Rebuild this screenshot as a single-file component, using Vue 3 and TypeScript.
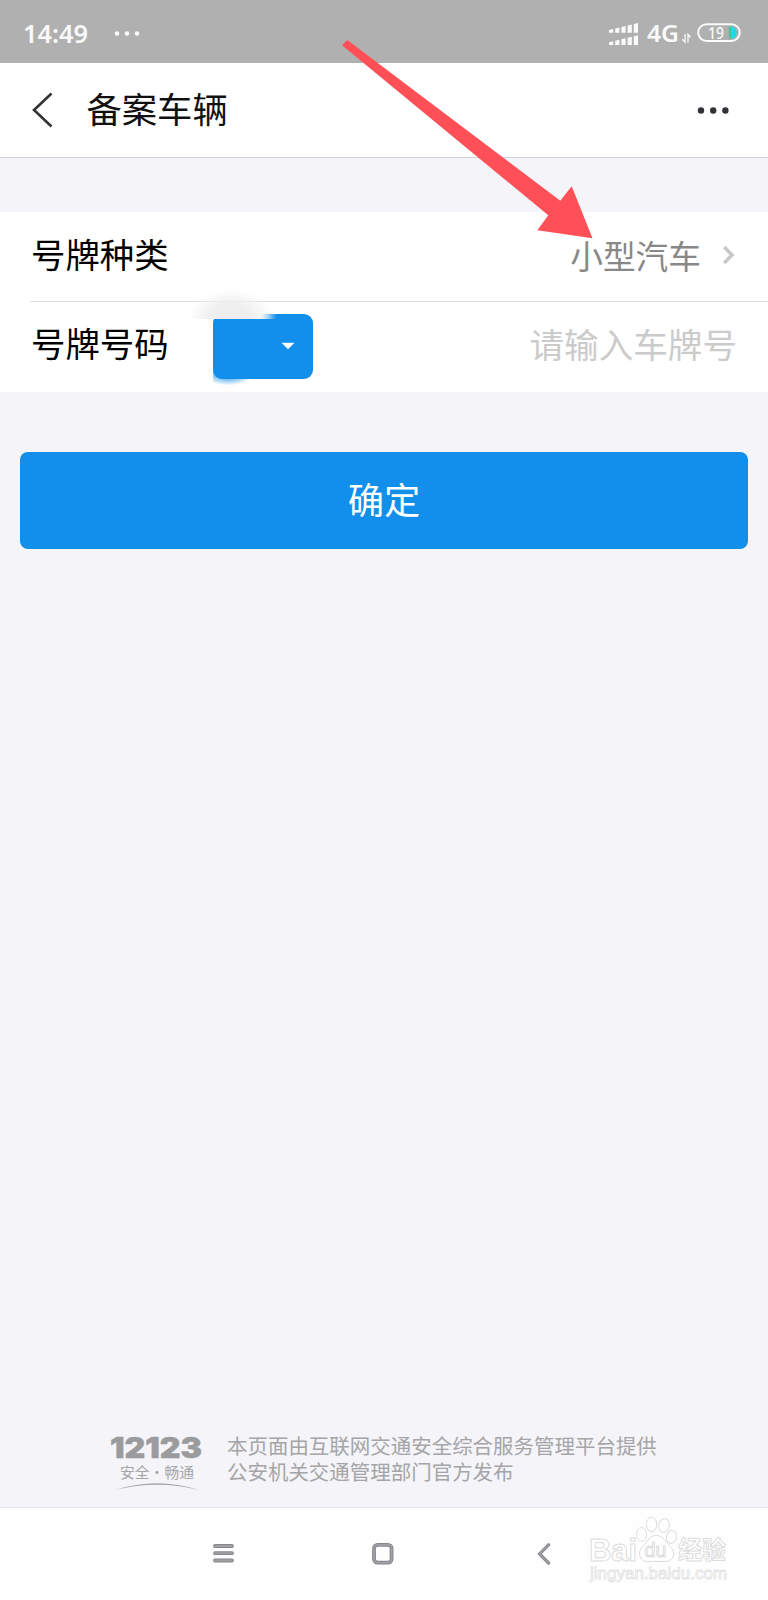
<script setup lang="ts">
import { ref } from 'vue'

const plateKind = ref<string>('小型汽车')
const plateNumber = ref<string>('')
const signalBars: number[] = [0, 1, 2, 3, 4]
</script>

<template>
  <div class="screen">
    <div class="status">
      <svg class="status-left" width="160" height="63" viewBox="0 0 160 63">
        <text x="23" y="42.7" textLength="65" lengthAdjust="spacingAndGlyphs" class="clock">14:49</text>
        <circle cx="117" cy="33.5" r="2.3" />
        <circle cx="127" cy="33.5" r="2.3" />
        <circle cx="137" cy="33.5" r="2.3" />
      </svg>
      <svg class="status-right" width="168" height="63" viewBox="600 0 168 63">
        <g v-for="i in signalBars" :key="i">
          <path :d="`M${609 + i * 6.2} ${30 - i * 1.5}l4.200-1V32.700h-4.200z`" />
          <path :d="`M${609 + i * 6.2} ${42.2 - i * 1.5}l4.200-1V45h-4.200z`" />
        </g>
        <text x="647" y="42" textLength="32" lengthAdjust="spacingAndGlyphs" class="net">4G</text>
        <path class="arrows" d="M685 34v8l-2.600-2.800M688 42.500v-8l2.600 2.800" />
        <rect class="cell" x="698.200" y="24.200" width="41.600" height="16.800" rx="8.400" />
        <path fill="#25d5e8" d="M730.500 26.500h1a6.200 6.200 0 0 1 0 12.300h-1z" />
        <path fill="#49c98a" d="M728.800 26.500h2.200v12.300h-2.200z" />
        <text x="708" y="38.600" textLength="16" lengthAdjust="spacingAndGlyphs" class="level">19</text>
      </svg>
    </div>

    <header class="header">
      <svg class="back" width="24" height="38" viewBox="0 0 24 38">
        <path d="M20.500 2.500 3 19l17.500 16.500" />
      </svg>
      <h1>备案车辆</h1>
      <svg class="more" width="34" height="8" viewBox="0 0 34 8">
        <circle cx="4" cy="4.500" r="3.200" />
        <circle cx="16.200" cy="4.500" r="3.200" />
        <circle cx="28.400" cy="4.500" r="3.200" />
      </svg>
    </header>

    <main class="main">
      <section class="form">
        <div class="row">
          <span class="label">号牌种类</span>
          <span class="value">{{ plateKind }}</span>
          <svg class="chevron" width="14" height="20" viewBox="0 0 14 20">
            <path d="m1.200 2 7.800 8-7.800 8" />
          </svg>
        </div>
        <div class="divider"></div>
        <div class="row">
          <span class="label">号牌号码</span>
          <div class="province">
            <svg width="14" height="8" viewBox="0 0 14 8"><path d="M.5.800h13L7 7.300z" /></svg>
            <span class="glow"></span>
            <span class="smudge"></span>
          </div>
          <input v-model="plateNumber" class="plate" placeholder="请输入车牌号" />
        </div>
      </section>
      <button class="confirm">确定</button>

      <footer class="footer">
        <svg class="brand" width="96" height="60" viewBox="108 1434 96 60">
          <text x="110" y="1457.800" textLength="92" lengthAdjust="spacingAndGlyphs" class="hotline">12123</text>
          <text x="120" y="1477.500" class="motto" textLength="74" lengthAdjust="spacingAndGlyphs">安全·畅通</text>
          <path d="M115 1490q42-13.500 84 0-42-10.500-84 0z" />
        </svg>
        <p>本页面由互联网交通安全综合服务管理平台提供<br />公安机关交通管理部门官方发布</p>
      </footer>
    </main>

    <nav class="nav">
      <svg width="24" height="24" viewBox="0 0 24 24">
        <path class="edge" d="M3 4h17M3 11.200h17M3 18.500h17" />
        <path class="core" d="M3 4h17M3 11.200h17M3 18.500h17" />
      </svg>
      <svg width="24" height="24" viewBox="0 0 24 24">
        <rect class="edge" x="2" y="2.800" width="17.600" height="17.800" rx="3.600" />
        <rect class="core" x="2" y="2.800" width="17.600" height="17.800" rx="3.600" />
      </svg>
      <svg width="24" height="24" viewBox="0 0 24 24">
        <path class="edge slim" d="M17.600 2.800 8.600 12l9 9" />
        <path class="core slim" d="M17.600 2.800 8.600 12l9 9" />
      </svg>
    </nav>

    <svg class="pointer" width="260" height="206" viewBox="338 36 260 206">
      <path d="M342 45.300 347.300 40 560.300 200.700 571.700 186.300 592.500 238.300 537.300 230.300 548.300 215.300z" />
    </svg>

    <svg class="watermark" width="150" height="76" viewBox="583 1512 150 76">
      <text x="589" y="1560.500" class="wm-big" textLength="48" lengthAdjust="spacingAndGlyphs">Bai</text>
      <ellipse cx="641.500" cy="1534.500" rx="5" ry="7" />
      <ellipse cx="651.500" cy="1524.500" rx="5.200" ry="7.200" />
      <ellipse cx="664" cy="1525.500" rx="5.200" ry="7" transform="rotate(12 664 1525.500)" />
      <ellipse cx="671.500" cy="1537" rx="5" ry="6.500" transform="rotate(12 671.500 1537)" />
      <path d="M656 1535.500c-6 0-7.500 5-11 8.500-4 4-6 6.500-5.300 11 .8 5 4 6.700 8.300 6.500 5-.2 10-.2 15 0 5 .2 9.500-1 10.500-6.500 .7-5-2.500-7.500-6-11.500-3.500-4-5.500-8-11.500-8z" />
      <text x="644.500" y="1557" class="wm-du" textLength="22" lengthAdjust="spacingAndGlyphs">du</text>
      <text x="678" y="1558.500" class="wm-cn" textLength="48" lengthAdjust="spacingAndGlyphs">经验</text>
      <text x="590" y="1578.500" class="wm-url" textLength="137" lengthAdjust="spacingAndGlyphs">jingyan.baidu.com</text>
    </svg>
  </div>
</template>

<style>
body {
  margin: 0;
}
</style>

<style scoped>
.screen {
  position: relative;
  display: flex;
  flex-direction: column;
  width: 768px;
  height: 1600px;
  overflow: hidden;
  background: #f4f4f9;
  color: #000;
  font-family: 'Noto Sans CJK SC', sans-serif;
}
svg {
  display: block;
  flex: none;
}
.status {
  display: flex;
  justify-content: space-between;
  height: 63px;
  background: #b0b0b0;
  fill: #fafafa;
}
.clock {
  font: 600 24.500px 'Noto Sans', sans-serif;
}
.net {
  font: 600 23.500px 'Noto Sans', sans-serif;
}
.level {
  font: 500 16px 'Noto Sans', sans-serif;
}
.arrows {
  fill: none;
  stroke: #fafafa;
  stroke-width: 1.300;
}
.cell {
  fill: none;
  stroke: #fafafa;
  stroke-width: 2;
}
.header {
  box-sizing: border-box;
  display: flex;
  align-items: center;
  height: 95px;
  padding: 0 37px 0 31px;
  border-bottom: 1px solid #d0d0d5;
  background: #fff;
}
.back {
  fill: none;
  stroke: #333;
  stroke-width: 2.600;
}
h1 {
  flex: 1;
  margin: 0 0 4px 31.500px;
  font-size: 35.300px;
  font-weight: 400;
  line-height: 50px;
  color: #111;
}
.more {
  fill: #303236;
}
.main {
  display: flex;
  flex: 1;
  flex-direction: column;
  padding-top: 54px;
}
.form {
  background: #fff;
}
.row {
  display: flex;
  align-items: center;
  box-sizing: border-box;
  height: 89px;
  padding: 0 31px 0 31px;
}
.row:last-child {
  height: 90px;
  padding-bottom: 2px;
}
.divider {
  height: 1px;
  margin-left: 30px;
  background: #dedee1;
}
.label {
  margin-bottom: 8px;
  font-size: 34.400px;
  line-height: 50px;
}
.value {
  margin: 0 22px 4px auto;
  font-size: 32.700px;
  line-height: 50px;
  color: #888;
}
.chevron {
  margin-bottom: 4px;
  fill: none;
  stroke: #c8c8c8;
  stroke-width: 3.600;
}
.province {
  position: relative;
  box-sizing: border-box;
  display: flex;
  align-items: center;
  justify-content: flex-end;
  width: 100px;
  height: 65px;
  margin-left: 44px;
  padding-right: 18px;
  border-radius: 9px;
  background: #128eeb;
}
.province svg {
  fill: #fff;
}
.glow {
  position: absolute;
  left: 0;
  bottom: -6px;
  width: 38px;
  height: 14px;
  background: radial-gradient(ellipse 26px 13px at 40% 10%, #128eeb 20%, #128eeb00 100%);
}
.smudge {
  position: absolute;
  left: -28px;
  top: -27px;
  width: 92px;
  height: 32px;
  background:
    radial-gradient(ellipse 42px 30px at 50% 100%, #efefef 0, #efefef 50%, #efefef00 100%),
    linear-gradient(90deg, #fff0 26px, #fff 26px, #fff 75px, #fff0 92px) bottom / 100% 6px no-repeat;
}
.plate {
  flex: 1;
  min-width: 0;
  height: 50px;
  margin: 0 0 6px;
  padding: 0;
  border: 0;
  outline: 0;
  background: transparent;
  font: 34.600px / 50px 'Noto Sans CJK SC', sans-serif;
  text-align: right;
}
.plate::placeholder {
  color: #cbcbcb;
  opacity: 1;
}
.confirm {
  height: 97px;
  margin: 60px 20px 0;
  padding: 0 0 5px;
  border: 0;
  border-radius: 8px;
  background: #128eeb;
  color: #fff;
  font: 36.300px / 50px 'Noto Sans CJK SC', sans-serif;
}
.footer {
  display: flex;
  margin: auto 0 13px 108px;
}
.footer p {
  margin: -2px 0 0 23px;
  font-size: 20.480px;
  line-height: 26.400px;
  color: #a5a5a7;
  white-space: nowrap;
}
.brand {
  overflow: visible;
  fill: #a5a5a8;
}
.hotline {
  font: 900 28px Inter, sans-serif;
  fill: #9b9b9e;
  stroke: #9b9b9e;
  stroke-width: 0.500;
}
.motto {
  font: 14.500px 'Noto Sans CJK SC', sans-serif;
}
.nav {
  box-sizing: border-box;
  display: flex;
  gap: 135.500px;
  height: 93px;
  padding: 34px 0 0 212px;
  border-top: 1px solid #e4e4e8;
  background: #fefefe;
}
.edge {
  fill: none;
  stroke: #85868a;
  stroke-width: 3.800;
  stroke-linecap: round;
}
.core {
  fill: none;
  stroke: #a0a1a4;
  stroke-width: 1.800;
  stroke-linecap: round;
}
.edge.slim {
  stroke-width: 3.200;
}
.core.slim {
  stroke-width: 1.400;
}
.pointer {
  position: absolute;
  left: 338px;
  top: 36px;
  fill: #ff5058;
}
.watermark {
  position: absolute;
  left: 583px;
  top: 1512px;
  fill: #fff;
  stroke: #dcdcdc;
  stroke-width: 1;
}
.wm-big {
  font: 700 32px 'Liberation Sans', sans-serif;
}
.wm-du {
  font: 400 20px 'Liberation Sans', sans-serif;
}
.wm-cn {
  font: 700 25px 'Noto Sans CJK SC', sans-serif;
}
.wm-url {
  font: 400 17px 'Liberation Sans', sans-serif;
  stroke: #e2e2e2;
  stroke-width: 0.800;
}
</style>
